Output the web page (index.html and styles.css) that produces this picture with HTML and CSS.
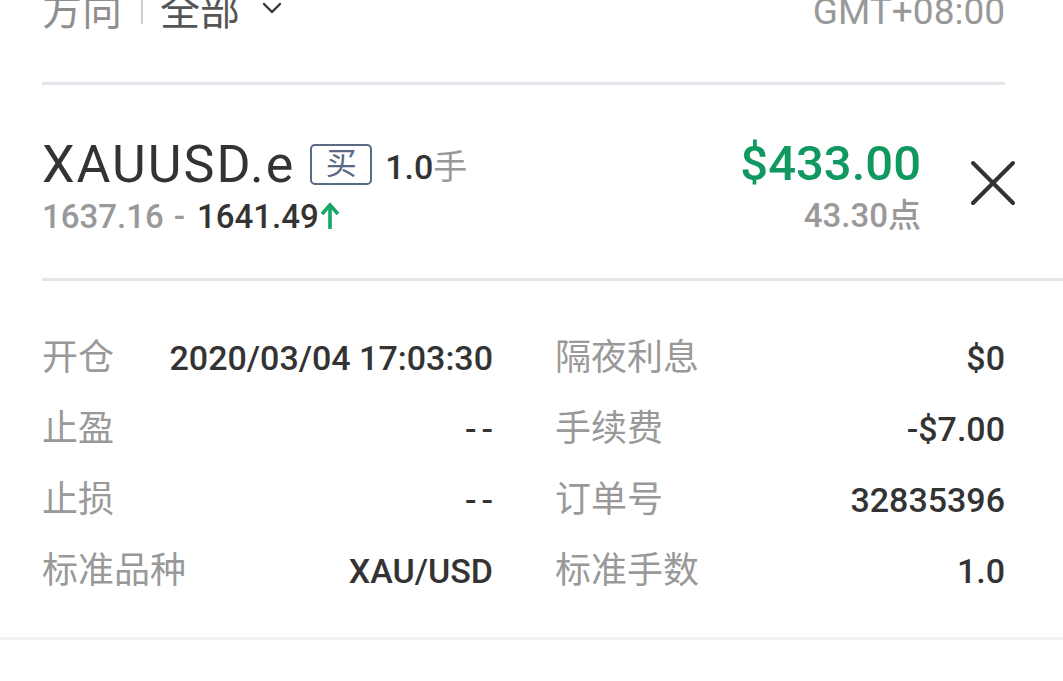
FILE: index.html
```html
<!DOCTYPE html>
<html lang="zh-CN">
<head>
    <meta charset="UTF-8">
    <meta name="viewport" content="width=device-width, initial-scale=1.0">
    <title>持仓详情</title>
    <link rel="stylesheet" href="styles.css">
</head>
<body>
    <div class="page">
        <div class="filter-bar">
            <div class="filter">
                <span class="filter-label">方向</span>
                <span class="filter-sep"></span>
                <span class="filter-value">全部</span>
                <svg class="chevron" width="20" height="12" viewBox="0 0 20 12">
                    <polyline points="2,2 10,10 18,2" fill="none" stroke="#333" stroke-width="2.4" stroke-linecap="round" stroke-linejoin="round"/>
                </svg>
            </div>
            <span class="timezone">GMT+08:00</span>
        </div>
        <div class="divider divider-short"></div>

        <div class="position">
            <div class="position-info">
                <div class="symbol-line">
                    <span class="symbol">XAUUSD.e</span>
                    <span class="badge">买</span>
                    <span class="lots"><b>1.0</b>手</span>
                </div>
                <div class="price-line">
                    <span class="price-open">1637.16</span>
                    <span class="price-dash">-</span>
                    <span class="price-now">1641.49</span>
                    <svg class="arrow-up" width="20" height="28" viewBox="0 0 20 28">
                        <line x1="10" y1="4" x2="10" y2="27" stroke="#16a865" stroke-width="3.6"/>
                        <polyline points="2,12 10,3 18,12" fill="none" stroke="#16a865" stroke-width="3.6" stroke-linejoin="miter"/>
                    </svg>
                </div>
            </div>
            <div class="position-profit">
                <div class="profit">$433.00</div>
                <div class="points">43.30点</div>
            </div>
            <button class="close-btn" aria-label="平仓">
                <svg width="46" height="46" viewBox="0 0 46 46">
                    <line x1="3" y1="3" x2="43" y2="43" stroke="#333" stroke-width="4" stroke-linecap="round"/>
                    <line x1="43" y1="3" x2="3" y2="43" stroke="#333" stroke-width="4" stroke-linecap="round"/>
                </svg>
            </button>
        </div>
        <div class="divider"></div>

        <div class="details">
            <div class="detail-row"><span class="detail-label">开仓</span><span class="detail-value">2020/03/04 17:03:30</span></div>
            <div class="detail-row"><span class="detail-label">隔夜利息</span><span class="detail-value">$0</span></div>
            <div class="detail-row"><span class="detail-label">止盈</span><span class="detail-value dash">--</span></div>
            <div class="detail-row"><span class="detail-label">手续费</span><span class="detail-value">-$7.00</span></div>
            <div class="detail-row"><span class="detail-label">止损</span><span class="detail-value dash">--</span></div>
            <div class="detail-row"><span class="detail-label">订单号</span><span class="detail-value">32835396</span></div>
            <div class="detail-row"><span class="detail-label">标准品种</span><span class="detail-value">XAU/USD</span></div>
            <div class="detail-row"><span class="detail-label">标准手数</span><span class="detail-value">1.0</span></div>
        </div>
    </div>
    <div class="section-end"></div>
</body>
</html>
```

FILE: styles.css
```css
:root {
    --text-dark: #333333;
    --text-muted: #999999;
    --line-color: #e4e4ea;
    --green: #0f985f;
    --badge-color: #5a6984;
}

* {
    box-sizing: border-box;
    margin: 0;
    padding: 0;
}

body {
    font-family: 'Roboto', 'Noto Sans CJK SC', sans-serif;
    color: var(--text-dark);
    background-color: #fff;
    overflow: hidden;
}

.page {
    padding-left: 42px;
}

/* top filter bar (scrolled partly out of view) */
.filter-bar {
    display: flex;
    align-items: center;
    justify-content: space-between;
    margin-right: 58px;
    margin-top: -13px;
    height: 50px;
    font-size: 40px;
    line-height: 50px;
    margin-bottom: 45px;
}

.filter {
    display: flex;
    align-items: center;
}

.filter-label {
    color: #8e8e8e;
}

.filter-sep {
    width: 2px;
    height: 30px;
    background-color: #d0d0d0;
    margin: -6px 17px 0 19px;
}

.filter-value {
    color: #555;
}

.chevron {
    margin-left: 22px;
    margin-top: -8px;
}

.timezone {
    color: var(--text-muted);
    font-size: 37px;
}

.divider {
    height: 3px;
    background-color: var(--line-color);
}

.divider-short {
    margin-right: 58px;
}

/* position summary */
.position {
    display: flex;
    align-items: center;
    padding: 49px 0 40px;
}

.position-info {
    flex: 1;
}

.symbol-line {
    display: flex;
    align-items: center;
    height: 60px;
}

.symbol {
    font-size: 52px;
    letter-spacing: 2px;
    color: var(--text-dark);
}

.badge {
    margin-left: 15px;
    width: 62px;
    height: 41px;
    border: 2.5px solid var(--badge-color);
    border-radius: 5px;
    color: var(--badge-color);
    font-size: 31px;
    line-height: 36px;
    text-align: center;
}

.lots {
    margin-left: 13px;
    font-size: 34px;
    color: var(--text-muted);
}

.lots b {
    font-weight: 500;
    color: var(--text-dark);
}

.price-line {
    display: flex;
    align-items: center;
    height: 44px;
    font-size: 33px;
    font-weight: 500;
}

.price-open,
.price-dash {
    color: var(--text-muted);
}

.price-dash {
    margin: 0 12px 0 10px;
}

.price-now {
    color: var(--text-dark);
}

.arrow-up {
    margin-left: 1px;
}

.position-profit {
    text-align: right;
}

.profit {
    height: 60px;
    line-height: 60px;
    font-size: 49px;
    font-weight: 500;
    color: var(--green);
}

.points {
    height: 44px;
    line-height: 44px;
    font-size: 33px;
    font-weight: 500;
    color: var(--text-muted);
}

.close-btn {
    border: none;
    background: none;
    margin: -6px 47px 0 49px;
    display: flex;
}

/* detail grid */
.details {
    display: grid;
    grid-template-columns: 451px 450px;
    column-gap: 62px;
    padding: 42px 0 30px;
}

.detail-row {
    display: flex;
    justify-content: space-between;
    height: 71px;
    line-height: 71px;
}

.detail-label {
    font-size: 36px;
    color: var(--text-muted);
}

.detail-value {
    font-size: 34px;
    font-weight: 500;
    color: var(--text-dark);
}

.detail-value.dash {
    letter-spacing: 5px;
    margin-right: -5px;
}

.section-end {
    height: 3px;
    background-color: #f2f2f2;
}
```
